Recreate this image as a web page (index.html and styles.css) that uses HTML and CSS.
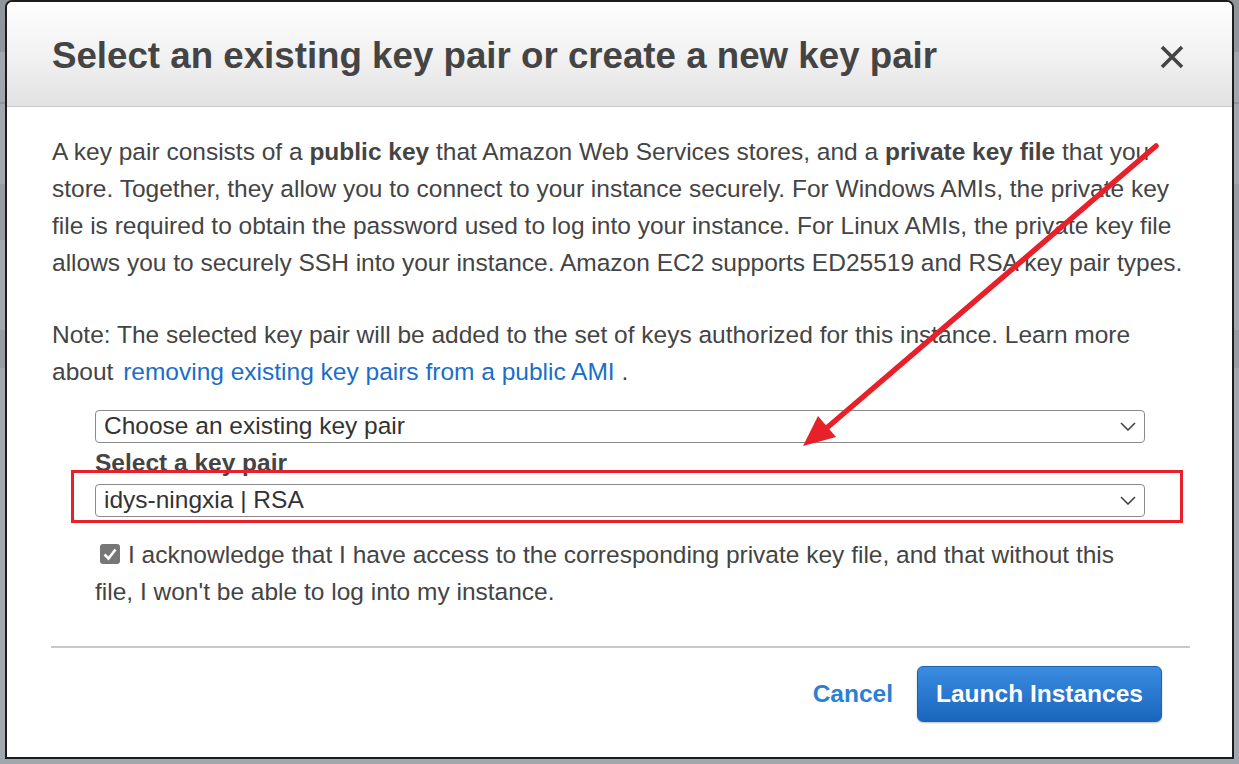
FILE: index.html
```html
<!DOCTYPE html>
<html lang="en">
<head>
<meta charset="utf-8">
<title>Select key pair</title>
<link rel="stylesheet" href="styles.css">
</head>
<body>
<div class="dialog">
  <div class="dialog-header">
    <h1 class="dialog-title">Select an existing key pair or create a new key pair</h1>
    <span class="close" aria-label="Close">
      <svg width="26" height="26" viewBox="0 0 26 26"><path d="M3 3 L23 23 M23 3 L3 23" stroke="#444" stroke-width="3.6" stroke-linecap="butt" fill="none"/></svg>
    </span>
  </div>
  <div class="dialog-body">
    <p class="para">A key pair consists of a <b>public key</b> that Amazon Web Services stores, and a <b>private key file</b> that you store. Together, they allow you to connect to your instance securely. For Windows AMIs, the private key file is required to obtain the password used to log into your instance. For Linux AMIs, the private key file allows you to securely SSH into your instance. Amazon EC2 supports ED25519 and RSA key pair types.</p>
    <p class="para note">Note: The selected key pair will be added to the set of keys authorized for this instance. Learn more about <a class="link" href="#">removing existing key pairs from a public AMI</a> .</p>
    <div class="form">
      <div class="select">
        <span>Choose an existing key pair</span>
        <svg class="chev" width="16" height="9" viewBox="0 0 16 9"><path d="M1 1 L8 8 L15 1" stroke="#444" stroke-width="1.6" fill="none"/></svg>
      </div>
      <div class="label">Select a key pair</div>
      <div class="select">
        <span>idys-ningxia | RSA</span>
        <svg class="chev" width="16" height="9" viewBox="0 0 16 9"><path d="M1 1 L8 8 L15 1" stroke="#444" stroke-width="1.6" fill="none"/></svg>
      </div>
      <div class="ack">
        <span class="checkbox"><svg width="20" height="20" viewBox="0 0 20 20"><path d="M4.5 10.5 L8.5 14.5 L15.5 5.5" stroke="#fff" stroke-width="2.6" fill="none"/></svg></span>I acknowledge that I have access to the corresponding private key file, and that without this file, I won't be able to log into my instance.
      </div>
    </div>
  </div>
  <div class="dialog-footer">
    <a class="cancel" href="#">Cancel</a>
    <button class="launch">Launch Instances</button>
  </div>
  <div class="highlight"></div>
  <svg class="arrow" width="1239" height="764" viewBox="0 0 1239 764">
    <line x1="1156" y1="146" x2="822" y2="432" stroke="#e8202a" stroke-width="5.5" stroke-linecap="round"/>
    <polygon points="803,446 818,416 836,437" fill="#e8202a"/>
  </svg>
</div>
</body>
</html>
```

FILE: styles.css
```css
* { box-sizing: border-box; }
html, body { margin: 0; padding: 0; }
body {
  width: 1239px;
  height: 764px;
  overflow: hidden;
  font-family: "Liberation Sans", Arial, sans-serif;
  background: linear-gradient(to bottom,
    #8f969c 0, #8f969c 52px, #a0a7ad 52px, #a0a7ad 102px, #8d949a 102px, #8d949a 104px,
    #a0a7ad 104px, #a0a7ad 184px, #959ca2 184px, #959ca2 240px, #a0a7ad 240px,
    #a0a7ad 330px, #959ca2 330px, #959ca2 368px, #a0a7ad 368px, #a0a7ad 764px);
  position: relative;
}
.dialog {
  position: relative;
  margin-left: 5px;
  width: 1229px;
  height: 759px;
  background: #fff;
  border: 2px solid #1c1c1c;
  border-radius: 7px 7px 0 0;
  display: flex;
  flex-direction: column;
  color: #444;
}
.dialog-header {
  height: 105px;
  flex: none;
  background: linear-gradient(to bottom, #fefefe 0%, #f2f2f2 50%, #e2e2e2 100%);
  border-bottom: 1px solid #c9c9c9;
  border-radius: 6px 6px 0 0;
  display: flex;
  align-items: center;
  justify-content: space-between;
  padding: 0 47px 0 45px;
}
.dialog-title {
  margin: 0;
  font-size: 36.7px;
  font-weight: bold;
  color: #444;
  position: relative;
  top: 2px;
}
.close { display: flex; position: relative; top: 3px; }
.dialog-body {
  padding: 26px 42px 0 45px;
}
.para {
  margin: 0 0 35px 0;
  font-size: 24.5px;
  line-height: 37px;
  color: #444;
}
.note { margin-bottom: 20px; }
.link { color: #1a6ec8; text-decoration: none; margin-left: 3px; }
.form { padding-left: 43px; width: 1093px; }
.select {
  height: 33px;
  border: 1px solid #8a8a8a;
  border-radius: 4px;
  display: flex;
  align-items: center;
  justify-content: space-between;
  padding: 0 8px 1px 8px;
  font-size: 24.5px;
  color: #333;
}
.label {
  font-weight: bold;
  font-size: 24.5px;
  color: #444;
  line-height: 27px;
  margin-top: 6px;
  margin-bottom: 8px;
}
.ack {
  margin-top: 19px;
  font-size: 24.5px;
  line-height: 37px;
  color: #444;
}
.checkbox {
  display: inline-flex;
  width: 20px;
  height: 20px;
  background: #777;
  border-radius: 3px;
  vertical-align: -1px;
  margin-left: 5px;
  margin-right: 8px;
}
.dialog-footer {
  margin: 36px 42px 0 44px;
  border-top: 2px solid #c8c8c8;
  display: flex;
  justify-content: flex-end;
  align-items: center;
  padding-top: 18px;
  padding-right: 28px;
  gap: 24px;
}
.cancel {
  color: #2b7fd5;
  font-weight: bold;
  font-size: 24.5px;
  text-decoration: none;
}
.launch {
  width: 245px;
  height: 56px;
  border: 1px solid #1d62ad;
  border-radius: 6px;
  background: linear-gradient(to bottom, #3a8de0 0%, #2a78d0 50%, #1a66bd 100%);
  color: #fff;
  font-family: "Liberation Sans", Arial, sans-serif;
  font-weight: bold;
  font-size: 24.5px;
  box-shadow: 0 1px 2px rgba(0,0,0,0.25);
  padding: 0;
}
.highlight {
  position: absolute;
  left: 64px;
  top: 468px;
  width: 1112px;
  height: 53px;
  border: 3px solid #e8202a;
}
.arrow {
  position: absolute;
  left: -7px;
  top: -2px;
  pointer-events: none;
}
```
